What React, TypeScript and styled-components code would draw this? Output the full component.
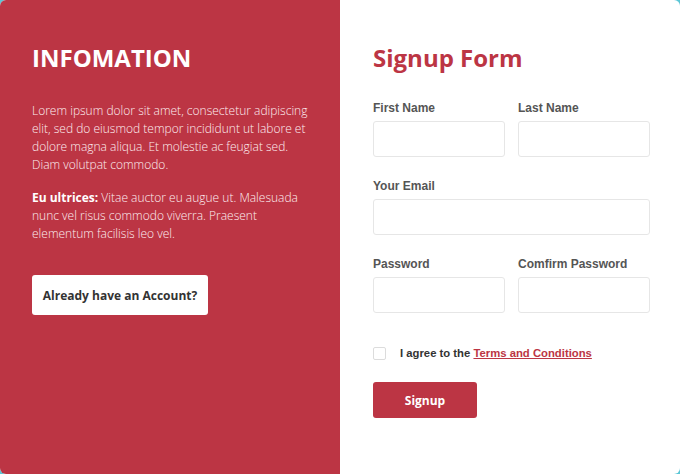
import React from 'react';
import styled, { createGlobalStyle } from 'styled-components';

const GlobalStyle = createGlobalStyle`
  html, body {
    margin: 0;
    padding: 0;
    background: #5cc6d6;
  }
  * { box-sizing: border-box; }
`;

const Card = styled.div`
  width: 680px;
  height: 474px;
  display: grid;
  grid-template-columns: 340px 340px;
  border-radius: 6px;
  overflow: hidden;
  background: #fff;
`;

const InfoPanel = styled.div`
  background: #bc3544;
  padding: 42px 30px 0 32px;
  font-family: "Open Sans", "Liberation Sans", sans-serif;
  color: #fff;
`;

const Title = styled.h2<{ $dark?: boolean }>`
  margin: 0;
  font-family: "Open Sans", "Liberation Sans", sans-serif;
  font-size: 24px;
  line-height: 32px;
  font-weight: 700;
  color: ${p => (p.$dark ? '#bc3544' : '#fff')};
`;

const Text = styled.p`
  margin: 0;
  font-size: 12px;
  line-height: 18px;
  font-weight: 300;
  color: #fdeef0;
  & + & { margin-top: 15px; }
  &:first-of-type { margin-top: 28px; }
  b { font-weight: 700; color: #fff; }
`;

const GhostButton = styled.button`
  margin-top: 32px;
  width: 176px;
  height: 40px;
  padding: 0;
  border: none;
  border-radius: 3px;
  background: #fff;
  color: #333;
  font-family: "Open Sans", "Liberation Sans", sans-serif;
  font-size: 12px;
  font-weight: 700;
  white-space: nowrap;
  cursor: pointer;
`;

const FormPanel = styled.form`
  padding: 42px 30px 0 33px;
  display: flex;
  flex-direction: column;
`;

const Row = styled.div<{ $cols?: number }>`
  display: grid;
  grid-template-columns: ${p => (p.$cols === 2 ? '1fr 1fr' : '1fr')};
  column-gap: 13px;
  margin-top: 21px;
  &:first-of-type { margin-top: 26px; }
`;

const Field = styled.label`
  display: flex;
  flex-direction: column;
`;

const Label = styled.span`
  font-family: "Liberation Sans", Arial, sans-serif;
  font-size: 12px;
  line-height: 16px;
  font-weight: 700;
  color: #555;
  margin-bottom: 5px;
`;

const Input = styled.input`
  height: 36px;
  width: 100%;
  border: 1px solid #e6e6e6;
  border-radius: 3px;
  background: #fff;
  padding: 0 10px;
  outline: none;
`;

const Agree = styled.label`
  display: flex;
  align-items: center;
  margin-top: 32px;
  font-family: "Liberation Sans", Arial, sans-serif;
  font-size: 11.3px;
  line-height: 16px;
  font-weight: 700;
  color: #333;
  white-space: pre;
  a {
    color: #bc3544;
    text-decoration: underline;
  }
`;

const Box = styled.span`
  width: 13px;
  height: 13px;
  border: 1px solid #dcdcdc;
  border-radius: 2px;
  margin-right: 14px;
  flex: none;
`;

const SubmitButton = styled.button`
  margin-top: 21px;
  width: 104px;
  height: 36px;
  border: none;
  border-radius: 3px;
  background: #bc3544;
  color: #fff;
  font-family: "Open Sans", "Liberation Sans", sans-serif;
  font-size: 12px;
  font-weight: 700;
  cursor: pointer;
`;

export default function App() {
  return (
    <>
      <GlobalStyle />
      <Card>
        <InfoPanel>
          <Title>INFOMATION</Title>
          <Text>
            Lorem ipsum dolor sit amet, consectetur adipiscing elit, sed do eiusmod tempor
            incididunt ut labore et dolore magna aliqua. Et molestie ac feugiat sed. Diam
            volutpat commodo.
          </Text>
          <Text>
            <b>Eu ultrices:</b> Vitae auctor eu augue ut. Malesuada nunc vel risus commodo
            viverra. Praesent elementum facilisis leo vel.
          </Text>
          <GhostButton type="button">Already have an Account?</GhostButton>
        </InfoPanel>
        <FormPanel onSubmit={e => e.preventDefault()}>
          <Title $dark>Signup Form</Title>
          <Row $cols={2}>
            <Field>
              <Label>First Name</Label>
              <Input type="text" />
            </Field>
            <Field>
              <Label>Last Name</Label>
              <Input type="text" />
            </Field>
          </Row>
          <Row>
            <Field>
              <Label>Your Email</Label>
              <Input type="email" />
            </Field>
          </Row>
          <Row $cols={2}>
            <Field>
              <Label>Password</Label>
              <Input type="password" />
            </Field>
            <Field>
              <Label>Comfirm Password</Label>
              <Input type="password" />
            </Field>
          </Row>
          <Agree>
            <Box />
            I agree to the <a href="#">Terms and Conditions</a>
          </Agree>
          <SubmitButton type="submit">Signup</SubmitButton>
        </FormPanel>
      </Card>
    </>
  );
}
